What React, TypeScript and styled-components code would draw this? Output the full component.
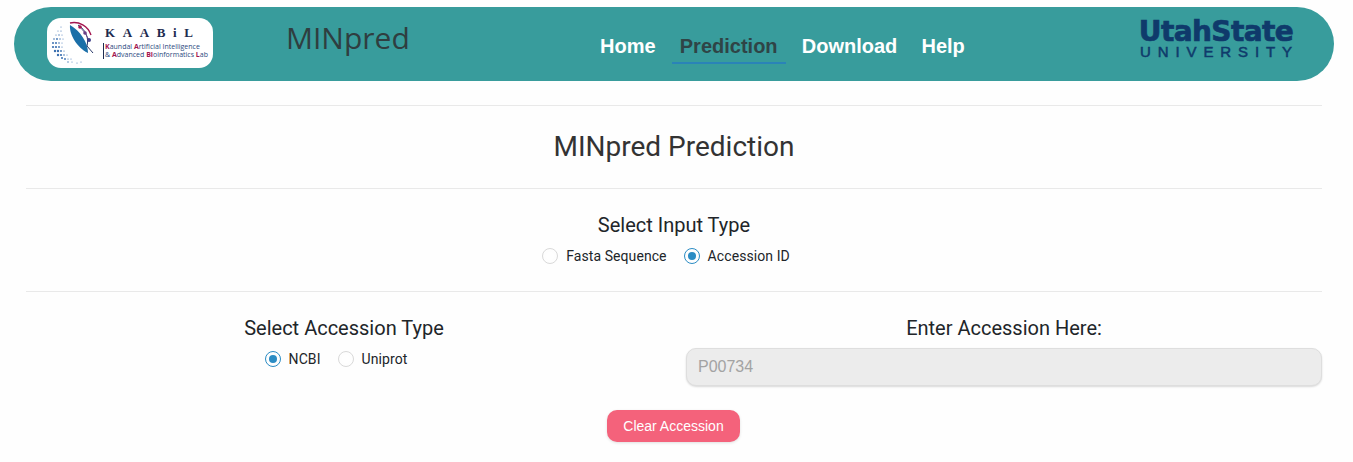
import React, { useState } from 'react';
import styled, { createGlobalStyle } from 'styled-components';

const GlobalStyle = createGlobalStyle`
  html, body {
    margin: 0;
    padding: 0;
    background: #fefefe;
    font-family: Roboto, "Liberation Sans", sans-serif;
    color: #212529;
  }
`;

const Page = styled.div`
  width: 1353px;
  height: 462px;
  overflow: hidden;
  box-sizing: border-box;
  padding-top: 7px;
`;

const Header = styled.header`
  margin: 0 19px 0 14px;
  height: 74px;
  border-radius: 37px;
  background: #389c9c;
  display: flex;
  align-items: flex-start;
`;

const LogoCard = styled.div`
  width: 166px;
  height: 50px;
  margin: 11px 0 0 33px;
  border-radius: 14px;
  background: #fff;
  display: flex;
  align-items: flex-start;
  flex-shrink: 0;
`;

const LogoMark = styled.svg`
  width: 56px;
  height: 50px;
  flex-shrink: 0;
`;

const LogoText = styled.div`
  display: flex;
  flex-direction: column;
  margin-top: 7px;
`;

const LogoName = styled.div`
  font-family: "Liberation Serif", serif;
  font-weight: 700;
  font-size: 13px;
  line-height: 15px;
  letter-spacing: 7.6px;
  color: #1d2b4f;
  margin-left: 2px;
`;

const LogoTagline = styled.div`
  font-family: "Open Sans", sans-serif;
  font-size: 7px;
  line-height: 8px;
  color: #2c4a80;
  border-left: 1px solid #1d2b4f;
  padding-left: 1px;
  margin-top: 3px;
  white-space: nowrap;
  b {
    color: #a3154f;
    font-weight: 700;
  }
`;

const Brand = styled.div`
  font-family: "Open Sans", sans-serif;
  font-size: 30px;
  line-height: 44px;
  color: #2f3e40;
  margin: 9px 0 0 73px;
  width: 123px;
`;

const Nav = styled.nav`
  display: flex;
  margin: 23px 0 0 183px;
`;

const NavLink = styled.a<{ $active?: boolean }>`
  font-family: "Liberation Sans", Arial, sans-serif;
  font-weight: 700;
  font-size: 20px;
  line-height: 23px;
  padding: 5px 8px 4px;
  margin-right: 8.2px;
  color: ${p => (p.$active ? '#2f4446' : '#fff')};
  border-bottom: 2px solid ${p => (p.$active ? '#2a83b8' : 'transparent')};
`;

const UsuLogo = styled.div`
  margin: 12px 40px 0 auto;
  width: 156px;
  color: #0f3a6b;
  text-align: center;
`;

const UsuTop = styled.div`
  font-family: "DejaVu Sans", sans-serif;
  font-weight: 700;
  font-size: 28px;
  line-height: 26px;
  letter-spacing: -0.6px;
  -webkit-text-stroke: 0.7px #0f3a6b;
  white-space: nowrap;
`;

const UsuBottom = styled.div`
  font-family: "Liberation Sans", Arial, sans-serif;
  font-size: 15px;
  line-height: 14px;
  letter-spacing: 6.9px;
  margin-right: -7px;
  -webkit-text-stroke: 0.5px #0f3a6b;
  white-space: nowrap;
`;

const Content = styled.main`
  margin: 0 31px 0 26px;
`;

const Rule = styled.hr<{ $top: number }>`
  border: 0;
  border-top: 1px solid #e9e9e9;
  margin: ${p => p.$top}px 0 0;
`;

const PageTitle = styled.h1`
  margin: 21px 0 21px;
  font-weight: 400;
  font-size: 28px;
  line-height: 40px;
  text-align: center;
  color: #333;
`;

const SectionTitle = styled.h2`
  margin: 0;
  font-weight: 400;
  font-size: 20px;
  line-height: 24px;
  text-align: center;
  color: #212529;
`;

const InputType = styled.section`
  padding-top: 24px;
  padding-bottom: 25px;
`;

const RadioRow = styled.div`
  display: flex;
  justify-content: center;
  align-items: center;
  gap: 17px;
  margin-top: 9px;
  padding-right: 16px;
`;

const RadioLabel = styled.label`
  display: flex;
  align-items: center;
  gap: 8px;
  font-size: 14px;
  line-height: 20px;
  letter-spacing: 0.08px;
  color: #212529;
  cursor: pointer;
`;

const RadioDot = styled.span<{ $checked: boolean }>`
  width: 16px;
  height: 16px;
  border-radius: 50%;
  box-sizing: border-box;
  background: ${p => (p.$checked ? '#2b8cc4' : '#fff')};
  background-clip: content-box;
  padding: 3px;
  border: 1px solid ${p => (p.$checked ? '#2b8cc4' : '#d9d9d9')};
`;

const Columns = styled.section`
  display: grid;
  grid-template-columns: 636px 636px;
  column-gap: 24px;
  padding-top: 24px;
`;

const Column = styled.div`
  display: flex;
  flex-direction: column;
`;

const TextField = styled.input`
  box-sizing: border-box;
  width: 100%;
  height: 38px;
  margin-top: 8px;
  padding: 0 11px;
  border: 1px solid #dedede;
  border-radius: 10px;
  background: #ececec;
  box-shadow: 0 1px 2px rgba(0, 0, 0, 0.15);
  font-family: "Liberation Sans", Arial, sans-serif;
  font-size: 16px;
  color: #a3a3a3;
  outline: none;
`;

const Actions = styled.div`
  display: flex;
  justify-content: center;
  margin-top: 24px;
  padding-right: 1px;
`;

const ClearButton = styled.button`
  width: 133px;
  height: 32px;
  border: 0;
  border-radius: 10px;
  background: #f4627b;
  box-shadow: 0 1px 3px rgba(0, 0, 0, 0.12);
  color: #fff;
  font-family: "Liberation Sans", Arial, sans-serif;
  font-size: 14px;
  cursor: pointer;
`;

// dots of the logo's half globe: [x, y, r]
const logoDots: [number, number, number][] = [
  [14, 9, 0.5], [11, 13, 0.5], [14, 13, 0.6], [9, 17, 0.6], [12, 17, 0.7], [15, 17, 0.5],
  [7, 21, 0.8], [10, 21, 0.9], [13, 21, 0.7], [16, 21, 0.5],
  [6, 25, 1], [9, 25, 1], [12, 25, 0.8], [15, 25, 0.5],
  [6, 29, 1.1], [9, 29, 1.1], [12, 29, 0.9], [15, 29, 0.6],
  [8, 33, 1.2], [11, 33, 1.2], [14, 33, 0.9], [17, 33, 0.6],
  [11, 37, 1.2], [14, 37, 1.1], [17, 37, 0.8], [20, 37, 0.5],
  [15, 40, 1], [18, 41, 0.9], [21, 41, 0.6], [24, 41, 0.5],
  [21, 44, 0.7], [25, 44, 0.5], [30, 45, 0.5], [34, 44, 0.5],
];

const KaabilMark = () => (
  <LogoMark viewBox="0 0 56 50">
    {logoDots.map(([x, y, r], i) => (
      <circle key={i} cx={x} cy={y} r={r} fill="#3a6fb0" />
    ))}
    <path d="M23 7 C22 16 30 30 41 35 C41 24 33 13 23 7 Z" fill="#1b6fa8" />
    <path d="M23 5 C32 3 41 8 44 17" fill="none" stroke="#a3154f" strokeWidth="1.4" />
    <path d="M31 7 C39 12 42 20 40 28 L46 35" fill="none" stroke="#2b3a6a" strokeWidth="1" />
    <path d="M33 9 L38 15 M38 15 L42 22" fill="none" stroke="#6a3f86" strokeWidth="0.8" />
    <circle cx="33" cy="9" r="1.8" fill="#a3154f" />
    <circle cx="38" cy="15" r="1.8" fill="#6a3f86" />
    <circle cx="42" cy="22" r="2" fill="#3f3f8a" />
  </LogoMark>
);

const Radio = ({ label, checked, onSelect }: { label: string; checked: boolean; onSelect: () => void }) => (
  <RadioLabel onClick={onSelect}>
    <RadioDot $checked={checked} />
    {label}
  </RadioLabel>
);

const App: React.FC = () => {
  const [inputType, setInputType] = useState('accession');
  const [source, setSource] = useState('ncbi');
  const [accession, setAccession] = useState('P00734');

  return (
    <Page>
      <GlobalStyle />
      <Header>
        <LogoCard>
          <KaabilMark />
          <LogoText>
            <LogoName>KAABiL</LogoName>
            <LogoTagline>
              <b>K</b>aundal <b>A</b>rtificial Intelligence<br />
              &amp; <b>A</b>dvanced <b>Bi</b>oinformatics <b>L</b>ab
            </LogoTagline>
          </LogoText>
        </LogoCard>
        <Brand>MINpred</Brand>
        <Nav>
          <NavLink>Home</NavLink>
          <NavLink $active>Prediction</NavLink>
          <NavLink>Download</NavLink>
          <NavLink>Help</NavLink>
        </Nav>
        <UsuLogo>
          <UsuTop>UtahState</UsuTop>
          <UsuBottom>UNIVERSITY</UsuBottom>
        </UsuLogo>
      </Header>

      <Content>
        <Rule $top={24} />
        <PageTitle>MINpred Prediction</PageTitle>
        <Rule $top={0} />
        <InputType>
          <SectionTitle>Select Input Type</SectionTitle>
          <RadioRow>
            <Radio label="Fasta Sequence" checked={inputType === 'fasta'} onSelect={() => setInputType('fasta')} />
            <Radio label="Accession ID" checked={inputType === 'accession'} onSelect={() => setInputType('accession')} />
          </RadioRow>
        </InputType>
        <Rule $top={0} />
        <Columns>
          <Column>
            <SectionTitle>Select Accession Type</SectionTitle>
            <RadioRow>
              <Radio label="NCBI" checked={source === 'ncbi'} onSelect={() => setSource('ncbi')} />
              <Radio label="Uniprot" checked={source === 'uniprot'} onSelect={() => setSource('uniprot')} />
            </RadioRow>
          </Column>
          <Column>
            <SectionTitle>Enter Accession Here:</SectionTitle>
            <TextField value={accession} onChange={e => setAccession(e.target.value)} />
          </Column>
        </Columns>
        <Actions>
          <ClearButton onClick={() => setAccession('')}>Clear Accession</ClearButton>
        </Actions>
      </Content>
    </Page>
  );
};

export default App;
